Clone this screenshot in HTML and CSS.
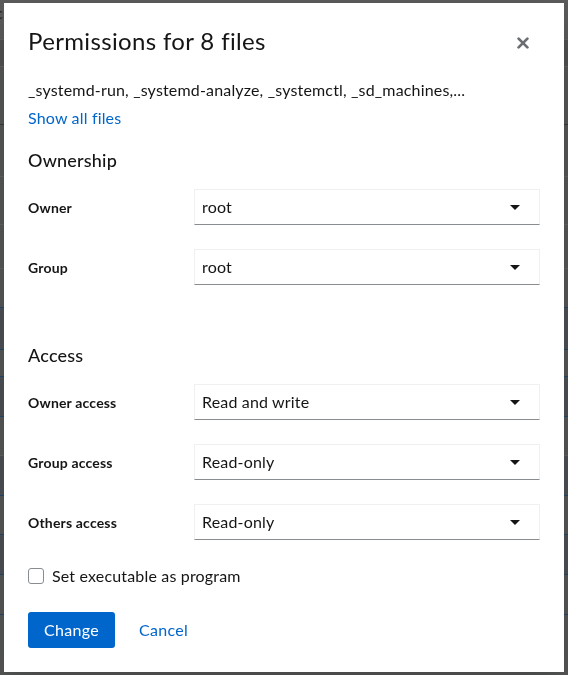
FILE: index.html
```html
<!DOCTYPE html>
<html lang="en">
<head>
<meta charset="utf-8">
<title>Permissions</title>
<link rel="stylesheet" href="styles.css">
</head>
<body>
<div class="page">
  <div class="prow p1"><span class="pchar">c</span></div>
  <div class="prow p2"></div>
  <div class="prow p3"></div>
  <div class="prow p4"></div>
  <div class="prow p5"></div>
  <div class="prow p6"></div>
  <div class="prow p7"></div>
  <div class="prow p8 sel"></div>
  <div class="prow p9"></div>
  <div class="prow p10 sel"></div>
  <div class="prow p11"></div>
  <div class="prow p12 sel"></div>
  <div class="prow p13"></div>
  <div class="prow p14 sel"></div>
  <div class="prow p15"></div>
</div>
<div class="backdrop">
  <div class="modal" role="dialog">
    <header class="modal-header">
      <h1 class="modal-title">Permissions for 8 files</h1>
      <button class="close" type="button" aria-label="Close">
        <svg width="12" height="12" viewBox="0 0 12 12"><path d="M1.6 1.6L10.4 10.4M10.4 1.6L1.6 10.4" stroke="currentColor" stroke-width="2.7" stroke-linecap="round" fill="none"/></svg>
      </button>
    </header>
    <div class="modal-body">
      <p class="files">_systemd-run, _systemd-analyze, _systemctl, _sd_machines,...</p>
      <a class="show-all" href="#">Show all files</a>

      <section class="form-section">
        <h2 class="section-title">Ownership</h2>
        <div class="form-row">
          <span class="label">Owner</span>
          <div class="select"><span>root</span><span class="caret"></span></div>
        </div>
        <div class="form-row">
          <span class="label">Group</span>
          <div class="select"><span>root</span><span class="caret"></span></div>
        </div>
      </section>

      <section class="form-section access">
        <h2 class="section-title">Access</h2>
        <div class="form-row">
          <span class="label">Owner access</span>
          <div class="select"><span>Read and write</span><span class="caret"></span></div>
        </div>
        <div class="form-row">
          <span class="label">Group access</span>
          <div class="select"><span>Read-only</span><span class="caret"></span></div>
        </div>
        <div class="form-row">
          <span class="label">Others access</span>
          <div class="select"><span>Read-only</span><span class="caret"></span></div>
        </div>
      </section>

      <label class="check"><span class="box"></span><span>Set executable as program</span></label>
    </div>
    <footer class="modal-footer">
      <button class="btn primary" type="button">Change</button>
      <button class="btn link" type="button">Cancel</button>
    </footer>
  </div>
</div>
</body>
</html>
```

FILE: styles.css
```css
* { box-sizing: border-box; }
html, body { margin: 0; padding: 0; }
body {
  width: 568px;
  height: 675px;
  overflow: hidden;
  background: #555656;
  font-family: Lato, "Noto Sans", sans-serif;
  color: #151515;
  letter-spacing: 0.17px;
}

/* background page seen through the overlay */
.page { display: flex; flex-direction: column; }
.prow { border-bottom: 1px solid #626262; background: #555656; }
.prow.sel { background: #4c5056; border-bottom-color: #22476b; }
.p1 { height: 40px; background: #5b5b5b; }
.pchar { display: block; font-size: 16px; color: #222; line-height: 26px; margin-left: -5px; }
.p2 { height: 27px; background: #515151; }
.p3 { height: 58px; border-bottom-color: #393939; }
.p4 { height: 52px; }
.p5 { height: 48px; }
.p6 { height: 44px; }
.p7 { height: 39px; border-bottom-color: #22476b; }
.p8 { height: 42px; }
.p9 { height: 27px; border-bottom-color: #22476b; }
.p10 { height: 40px; }
.p11 { height: 39px; }
.p12 { height: 40px; }
.p13 { height: 39px; border-bottom-color: #22476b; }
.p14 { height: 40px; }
.p15 { height: 40px; border-bottom-color: #22476b; }

.backdrop {
  position: fixed;
  inset: 0;
  display: flex;
  align-items: center;
  justify-content: center;
}

.modal {
  position: relative;
  width: 560px;
  background: #fff;
  box-shadow: 0 16px 32px rgba(3,3,3,.16);
  display: flex;
  flex-direction: column;
}

.modal-header { padding: 22px 24px 0; }
.modal-title {
  margin: 0;
  font-size: 24px;
  line-height: 31px;
  font-weight: 400;
  letter-spacing: 0.35px;
  color: #151515;
}
.close {
  position: absolute;
  top: 28px;
  right: 19px;
  border: 0;
  background: none;
  padding: 6px 16px;
  color: #6a6e73;
  display: flex;
}

.modal-body { padding: 22px 24px 0; font-size: 16px; line-height: 24px; }
.files { margin: 0; }
.show-all {
  display: block;
  margin-top: 4px;
  color: #06c;
  text-decoration: none;
}

.form-section { display: flex; flex-direction: column; gap: 24px; margin-top: 18px; }
.form-section.access { margin-top: 58px; }
.section-title {
  margin: 0 0 -7px;
  font-size: 18px;
  line-height: 24px;
  font-weight: 500;
  letter-spacing: 0.2px;
}

.form-row {
  display: grid;
  grid-template-columns: 150px 1fr;
  column-gap: 16px;
  align-items: center;
}
.label { font-size: 14px; font-weight: 700; line-height: 21px; }
.select {
  height: 36px;
  display: flex;
  align-items: center;
  justify-content: space-between;
  padding: 0 19px 0 7px;
  border: 1px solid #f0f0f0;
  border-bottom-color: #8a8d90;
  font-size: 16px;
}
.caret {
  width: 0;
  height: 0;
  border-left: 5px solid transparent;
  border-right: 5px solid transparent;
  border-top: 5px solid #151515;
}

.check {
  display: flex;
  align-items: center;
  gap: 8px;
  margin-top: 24px;
  height: 24px;
}
.box {
  width: 16px;
  height: 16px;
  border: 1px solid #8a8d90;
  border-radius: 3px;
  background: #fff;
}

.modal-footer { display: flex; gap: 8px; padding: 24px; }
.btn {
  height: 36px;
  padding: 0 16px 2px;
  border: 0;
  border-radius: 3px;
  font: inherit;
  font-size: 16px;
  letter-spacing: 0.3px;
  cursor: pointer;
}
.btn.primary { background: #06c; color: #fff; }
.btn.link { background: none; color: #06c; }
```
